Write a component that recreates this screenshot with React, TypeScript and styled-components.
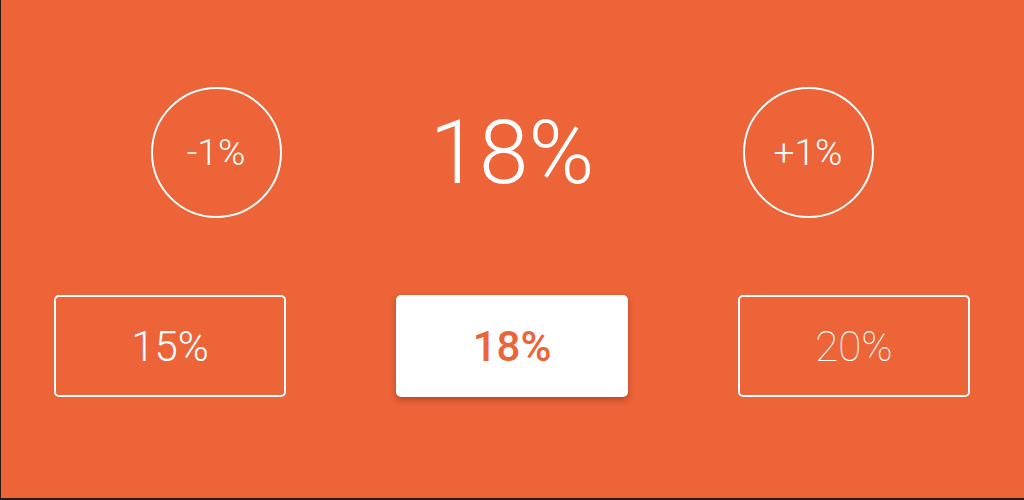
import React from 'react';
import styled, {createGlobalStyle} from 'styled-components';

const GlobalStyle = createGlobalStyle`
    html, body {
        margin: 0;
        padding: 0;
        background: #2b1a13;
    }
    body {
        font-family: Roboto, "Noto Sans", sans-serif;
    }
`;

const Screen = styled.div`
    box-sizing: border-box;
    margin-left: 1px;
    width: 1023px;
    height: 498px;
    background-color: #ec6438;
    color: #ffffff;
    display: flex;
    flex-direction: column;
    padding-top: 87px;
`;

const StepperRow = styled.div`
    display: grid;
    grid-template-columns: repeat(3, 296px);
    justify-content: center;
    align-items: center;
    height: 131px;
    margin-left: -1px;
`;

const StepButton = styled.button`
    box-sizing: border-box;
    justify-self: center;
    width: 131px;
    height: 131px;
    border-radius: 50%;
    border: 2.5px solid #ffffff;
    background: transparent;
    color: #ffffff;
    font-family: Roboto, sans-serif;
    font-weight: 300;
    font-size: 37px;
    padding: 0;
    display: flex;
    align-items: center;
    justify-content: center;
    cursor: pointer;
`;

const Value = styled.div`
    justify-self: center;
    font-weight: 300;
    font-size: 89px;
    line-height: 1;
`;

const PresetRow = styled.div`
    display: flex;
    justify-content: center;
    gap: 110px;
    margin-top: 77px;
    margin-left: -1px;
`;

type PresetProps = {
    $active?: boolean;
    $weight: number;
};

const Preset = styled.button<PresetProps>`
    box-sizing: border-box;
    width: 232px;
    height: 102px;
    border-radius: 5px;
    border: 2.5px solid #ffffff;
    background: ${({$active}) => ($active ? '#ffffff' : 'transparent')};
    color: ${({$active}) => ($active ? '#ec6438' : '#ffffff')};
    box-shadow: ${({$active}) => ($active ? '0 3px 6px rgba(80, 20, 0, 0.35)' : 'none')};
    font-family: Roboto, sans-serif;
    font-weight: ${({$weight}) => $weight};
    font-size: 42px;
    padding: 0;
    display: flex;
    align-items: center;
    justify-content: center;
    cursor: pointer;
`;

const presets = [
    {label: '15%', weight: 300},
    {label: '18%', weight: 500, active: true},
    {label: '20%', weight: 100},
];

export default function App() {
    return (
        <>
            <GlobalStyle />
            <Screen>
                <StepperRow>
                    <StepButton>-1%</StepButton>
                    <Value>18%</Value>
                    <StepButton>+1%</StepButton>
                </StepperRow>
                <PresetRow>
                    {presets.map((p) => (
                        <Preset key={p.label} $active={p.active} $weight={p.weight}>
                            {p.label}
                        </Preset>
                    ))}
                </PresetRow>
            </Screen>
        </>
    );
}
